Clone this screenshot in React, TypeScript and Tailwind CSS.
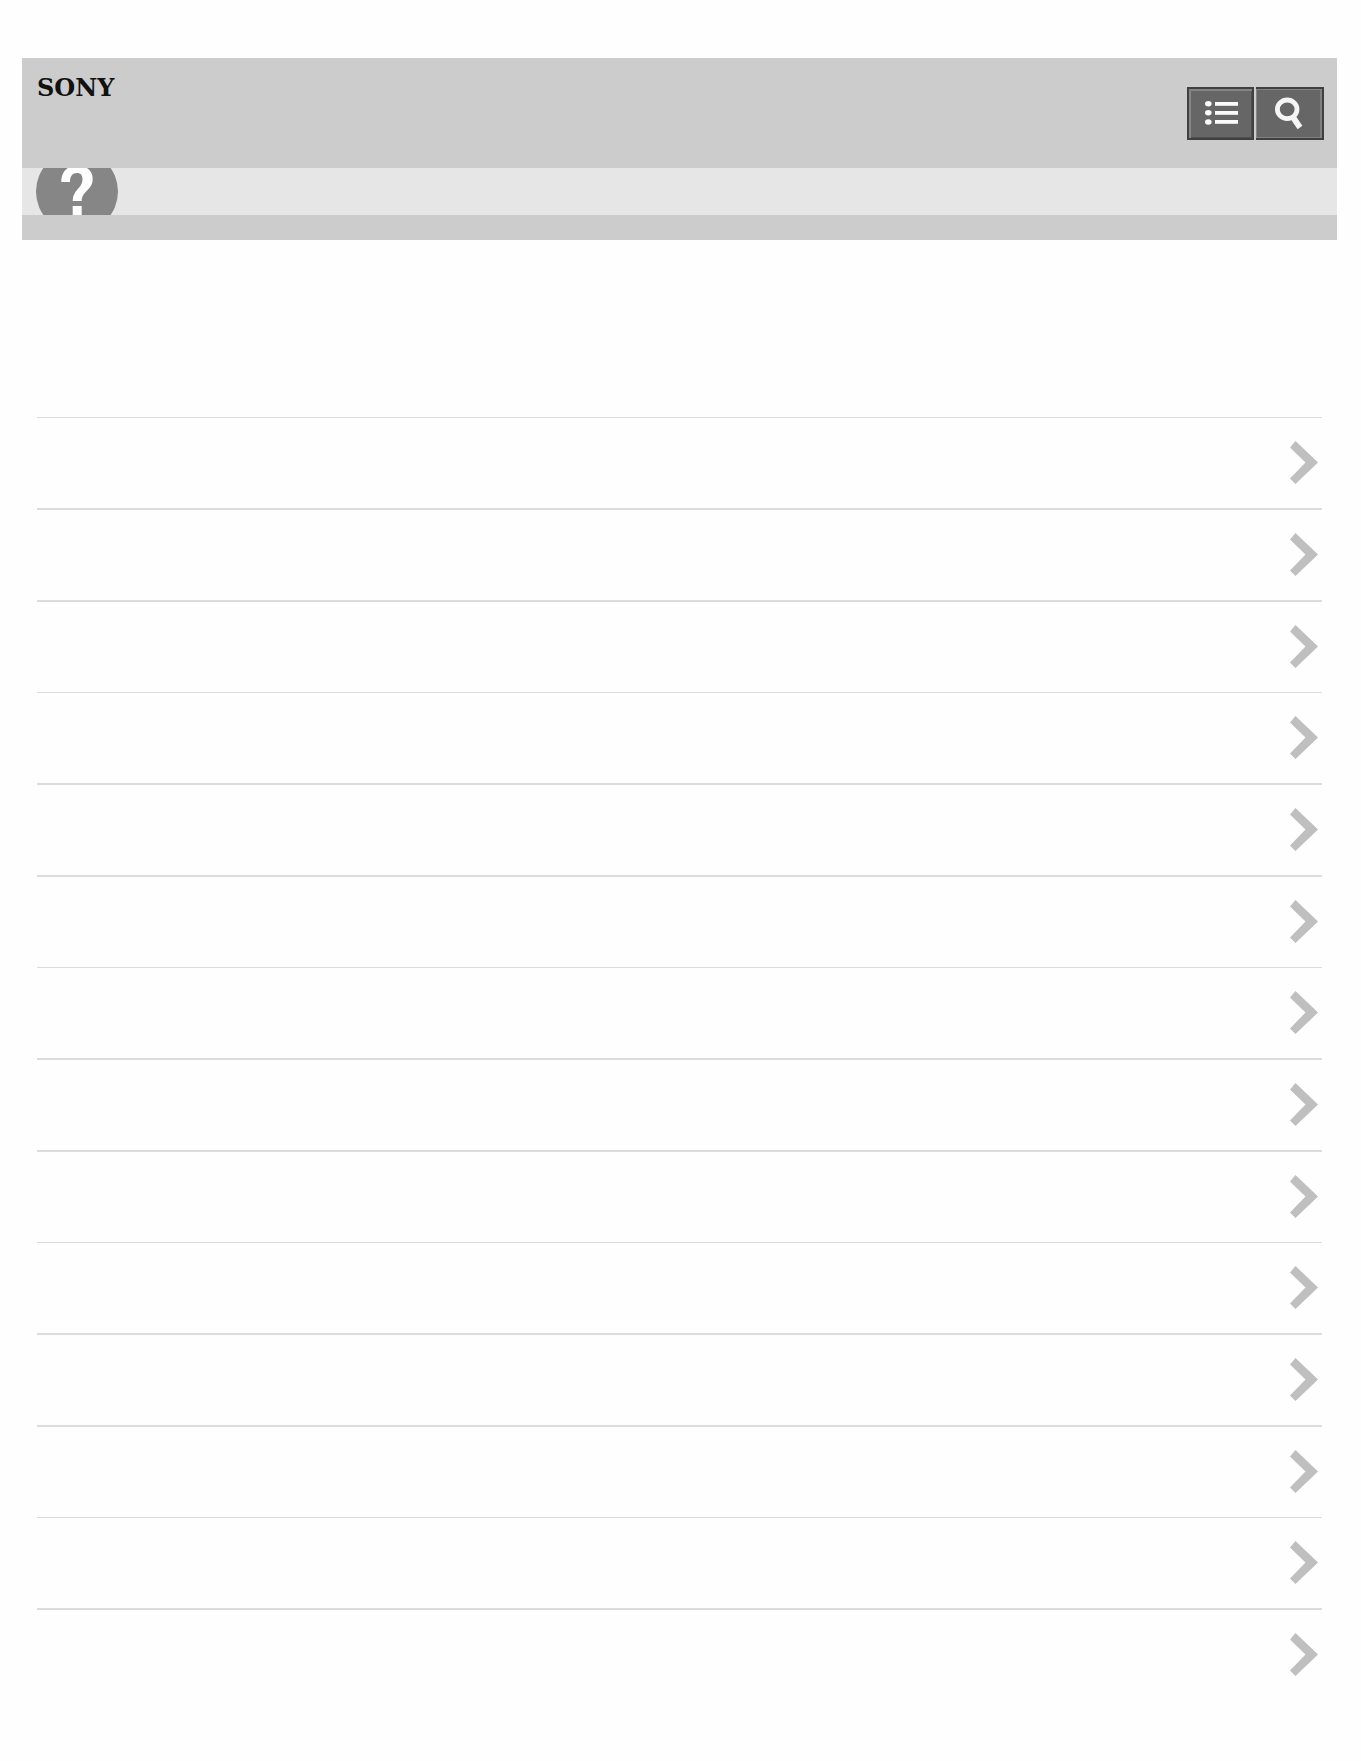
import React from 'react';

interface Topic {
  id: number;
  height: string;
}

// Dividers repeat in groups of three
const rowStyles = [
  'h-[91px] border-t',
  'h-[92px] border-t-2',
  'h-[92px] border-t-2',
];

const topics: Topic[] = Array.from({ length: 14 }, (_, i) => ({
  id: i + 1,
  height: rowStyles[i % 3],
}));

const ListIcon = () => (
  <svg width="35" height="25" viewBox="0 0 35 25" fill="#fafafa" aria-hidden="true">
    <ellipse cx="5.3" cy="2.8" rx="3.3" ry="2.7" />
    <ellipse cx="5.3" cy="11.8" rx="3.3" ry="2.7" />
    <ellipse cx="5.3" cy="21" rx="3.3" ry="2.7" />
    <rect x="12" y="1" width="23" height="3.8" />
    <rect x="12" y="10" width="23" height="3.8" />
    <rect x="12" y="19" width="23" height="3.8" />
  </svg>
);

const SearchIcon = () => (
  <svg width="30" height="34" viewBox="0 0 30 34" fill="none" stroke="#f5f5f5" aria-hidden="true">
    <ellipse cx="13.2" cy="12.3" rx="9.8" ry="9.3" strokeWidth="4.8" />
    <path d="M18.5 19.5 L26 30.5" strokeWidth="5.8" />
  </svg>
);

const HelpIcon = () => (
  <svg width="82" height="47" viewBox="0 0 82 47" className="block" aria-hidden="true">
    <circle cx="41" cy="23.5" r="41" fill="#868686" />
    <path
      d="M25.3 14 C25.3 4 31 -2.5 41 -2.5 C51 -2.5 56.7 3 56.7 11 C56.7 22 45.7 23 45.7 33 L36.7 33 C36.7 22 46.5 20 46.5 11.5 C46.5 7 44.5 5 41 5 C36.5 5 34 8 34 14 Z"
      fill="#fff"
    />
    <rect x="36.7" y="38" width="9" height="9" fill="#fff" />
  </svg>
);

const ChevronIcon = () => (
  <svg width="28" height="43" viewBox="0 0 28 43" aria-hidden="true">
    <path d="M0 6.5 L5.5 0 L28 21.5 L5.5 43 L0 37.5 L15.5 21.5 Z" fill="#bfbfbf" />
  </svg>
);

const App: React.FC = () => {
  return (
    <div className="min-h-screen bg-[#fefefe] pt-[58px] pl-[22px] pr-6 font-['Liberation_Sans',sans-serif]">
      <header className="bg-[#ccc] pb-[25px]">
        <div className="flex h-[110px] items-start justify-between pl-[15px] pr-[13px]">
          <a
            href="#"
            className="mt-[18px] text-2xl leading-6 font-bold text-[#111] font-['DejaVu_Serif',serif]"
          >
            SONY
          </a>
          <div className="mt-[29px] flex gap-0.5">
            <button
              type="button"
              aria-label="Menu"
              className="flex h-[53px] w-[67px] items-center justify-center border-2 border-[#404040] bg-[#666] shadow-[inset_2px_2px_0_#858585,inset_-1px_-1px_0_#505050]"
            >
              <ListIcon />
            </button>
            <button
              type="button"
              aria-label="Search"
              className="flex h-[53px] w-[68px] items-center justify-center border-y-2 border-r-2 border-[#404040] bg-[#666] shadow-[inset_1px_1px_0_#858585,inset_-2px_-1px_0_#808080]"
            >
              <SearchIcon />
            </button>
          </div>
        </div>
        <div className="h-[47px] overflow-hidden bg-[#e6e6e6] pl-3.5">
          <HelpIcon />
        </div>
      </header>

      <main className="px-[15px] pt-[177px] pb-[61px]">
        <ul>
          {topics.map((topic) => (
            <li key={topic.id} className={`border-[#dcdcdc] ${topic.height}`}>
              <a
                href="#"
                aria-label={`Topic ${topic.id}`}
                className="flex h-full items-center justify-end pr-1 pb-0.5"
              >
                <ChevronIcon />
              </a>
            </li>
          ))}
        </ul>
      </main>
    </div>
  );
};

export default App;
